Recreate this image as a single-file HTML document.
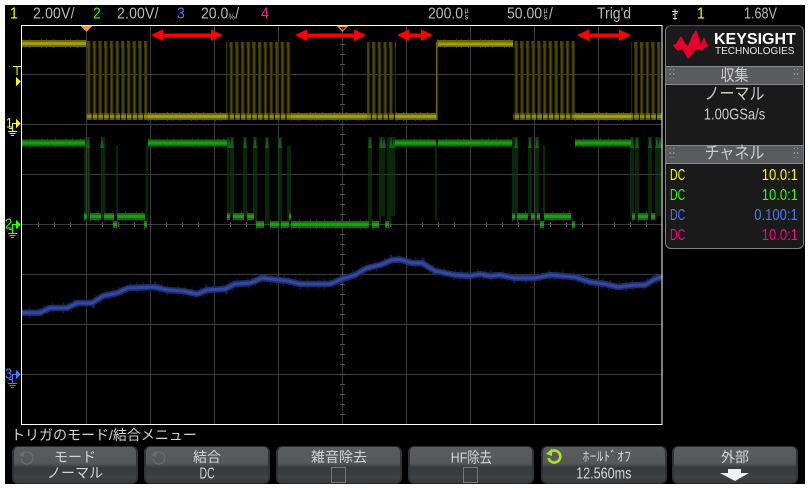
<!DOCTYPE html>
<html><head><meta charset="utf-8"><style>
html,body{margin:0;padding:0;background:#fff}
#s{position:relative;width:810px;height:490px;overflow:hidden;background:#fff}
#b{position:absolute;left:5px;top:5px;width:800px;height:479px;background:#000}
svg{position:absolute;left:0;top:0}
.t{position:absolute;white-space:nowrap;font:14px/16px "Liberation Sans","Noto Sans CJK JP",sans-serif;color:#bdbdbd;transform:scale(1,1.12);transform-origin:left center}
.c{text-align:center;transform-origin:center}
.r{transform-origin:right center}
.u{display:inline-block;font-size:7px;line-height:6px;vertical-align:-1px;width:7px;text-align:center}
.n{display:inline-block;transform:scale(.88,1.12)}
.p{position:absolute;left:665px;top:25px;width:137px;height:222px;background:#1a1a1a;border:1px solid #808080;border-radius:6px;border-top-color:#555}
.h{position:absolute;left:666px;width:137px;height:17px;background:#585c5e;border-top:1px solid #8a8a8a;border-bottom:1px solid #8a8a8a}
.btn{position:absolute;top:446px;width:126px;height:38px;border-radius:6px;box-sizing:border-box;border:1px solid #2a2d2f;border-left:2px solid #2f3335;border-right:2px solid #2f3335;background:linear-gradient(#5a5d5f 0,#55585a 45%,#36393b 58%,#3f4244 85%,#35383a 100%)}
.l{position:absolute;left:0;width:100%;text-align:center;top:2px;font:14px/16px "Liberation Sans","Noto Sans CJK JP",sans-serif;color:#d4d4d4}
.v{top:18px}
.cb{position:absolute;width:13px;height:14px;border:1px solid #777;top:20px}
</style></head><body><div id="s"><div id="b"></div>
<svg width="810" height="490" viewBox="0 0 810 490" shape-rendering="crispEdges">
<defs>
<pattern id="p1" patternUnits="userSpaceOnUse" width="5.7" height="4" x="87" shape-rendering="auto"><rect width="3.6" height="4" fill="#2c2a00"/><rect x="1.1" width="1.4" height="4" fill="#524e00"/></pattern>
<pattern id="p2" patternUnits="userSpaceOnUse" width="5.7" height="4" x="87" shape-rendering="auto"><rect width="4.6" height="4" fill="#5f5b00"/></pattern>
<pattern id="p3" patternUnits="userSpaceOnUse" width="5.7" height="4" x="87" shape-rendering="auto"><rect width="4.6" height="4" fill="#8e890e"/></pattern>
<pattern id="p4" patternUnits="userSpaceOnUse" width="5.7" height="4" x="87" shape-rendering="auto"><rect width="2.6" height="4" fill="#4a4600"/></pattern>
</defs>
<g stroke="#3c3c3c" stroke-width="1" fill="none">
<path d="M22 74.5H662M22 124.5H662M22 174.5H662M22 224.5H662M22 274.5H662M22 324.5H662M22 374.5H662"/>
<path d="M86.5 26V424M150.5 26V424M214.5 26V424M278.5 26V424M342.5 26V424M406.5 26V424M470.5 26V424M534.5 26V424M598.5 26V424"/>
</g>
<path d="M38 224.5H662" stroke="#555" stroke-width="5" stroke-dasharray="1 15" fill="none"/>
<path d="M342.5 34V424" stroke="#555" stroke-width="5" stroke-dasharray="1 9" fill="none"/>
<g>
<g shape-rendering="auto">
<rect x="87" y="41" width="61" height="79" fill="url(#p1)"/><rect x="87" y="41" width="61" height="7" fill="url(#p4)"/><rect x="87" y="113" width="61" height="7" fill="url(#p2)"/><rect x="87" y="115" width="61" height="3" fill="url(#p3)"/>
<rect x="226" y="42" width="65" height="78" fill="url(#p1)"/><rect x="226" y="42" width="65" height="6" fill="url(#p4)"/><rect x="226" y="113" width="65" height="7" fill="url(#p2)"/><rect x="226" y="115" width="65" height="3" fill="url(#p3)"/>
<rect x="367" y="42" width="29" height="78" fill="url(#p1)"/><rect x="367" y="42" width="29" height="6" fill="url(#p4)"/><rect x="367" y="113" width="29" height="7" fill="url(#p2)"/><rect x="367" y="115" width="29" height="3" fill="url(#p3)"/>
<rect x="513" y="41" width="62" height="79" fill="url(#p1)"/><rect x="513" y="41" width="62" height="7" fill="url(#p4)"/><rect x="513" y="113" width="62" height="7" fill="url(#p2)"/><rect x="513" y="115" width="62" height="3" fill="url(#p3)"/>
<rect x="631" y="42" width="31" height="78" fill="url(#p1)"/><rect x="631" y="42" width="31" height="6" fill="url(#p4)"/><rect x="631" y="113" width="31" height="7" fill="url(#p2)"/><rect x="631" y="115" width="31" height="3" fill="url(#p3)"/>
</g>
<path d="M22 43.5H86M437 43.5H513M148 116.5H226M291 116.5H367M396 116.5H437M575 116.5H631" stroke="#3f3c00" stroke-width="9" stroke-dasharray="1 6 1 11 1 4" fill="none"/>
<path d="M22 43.5H86M437 43.5H513M148 116.5H226M291 116.5H367M396 116.5H437M575 116.5H631" stroke="#6a6600" stroke-width="7" fill="none"/>
<path d="M22 43.5H86M438 44H513M148 116.5H226M291 116.5H367M396 116.5H437M575 116.5H631" stroke="#a09b12" stroke-width="3" fill="none"/>
<path d="M436.5 42V120" stroke="#6e6a00" stroke-width="1.5" fill="none"/>
</g>
<g fill="none">
<path shape-rendering="auto" d="M85 137V216M88 137V216M89 137V216M102 137V216M104 137V216M117 146V216M147 145V222M228 137V216M231 137V216M233 137V216M244 137V216M246 137V216M254 137V216M256 137V224M266 137V224M268 137V224M279 137V224M281 137V224M288 146V224M290 146V216M369 137V224M371 137V224M380 137V224M382 137V216M384 137V216M388 137V224M390 137V224M392 137V216M394 137V216M436 143V220M513 137V216M515 137V216M517 137V216M529 137V216M531 137V216M536 137V216M538 137V216M544 146V216M631 137V216M633 137V216M636 137V216M638 137V216M649 137V216M651 137V216M656 137V216M658 137V216M660 137V216" stroke="#0d430d" stroke-width="1.2"/>
<path shape-rendering="auto" fill="#156015" stroke="none" d="M86 148l2-11 2 11zM100 148l2-11 2 11zM227 148l2-11 2 11zM230 148l2-11 2 11zM243 148l2-11 2 11zM253 148l2-11 2 11zM265 148l2-11 2 11zM278 148l2-11 2 11zM368 148l2-11 2 11zM379 148l2-11 2 11zM382 148l2-11 2 11zM389 148l2-11 2 11zM392 148l2-11 2 11zM514 148l2-11 2 11zM528 148l2-11 2 11zM535 148l2-11 2 11zM630 148l2-11 2 11zM635 148l2-11 2 11zM648 148l2-11 2 11zM655 148l2-11 2 11zM658 148l2-11 2 11z"/>
<path d="M22 143H85M148 143H227M395 143H436M438 143H512M575 143H631" stroke="#083a08" stroke-width="10" stroke-dasharray="1 7 1 10 1 5"/>
<path d="M84 216.5H87M90 216.5H101M104 216.5H114M117 216.5H145M227 216.5H230M233 216.5H244M247 216.5H254M289 216.5H291M512 216.5H515M517 216.5H528M531 216.5H535M537 216.5H540M544 216.5H571M632 216.5H635M638 216.5H648M651 216.5H655M113 224.5H117M144 224.5H147M256 224.5H264M270 224.5H279M281 224.5H289M291 224.5H369M372 224.5H379M385 224.5H389M540 224.5H544M572 224.5H575" stroke="#083a08" stroke-width="11" stroke-dasharray="1 7 1 10 1 5"/>
<path d="M22 143H85M148 143H227M395 143H436M438 143H512M575 143H631" stroke="#0f6e0f" stroke-width="7"/>
<path d="M84 216.5H87M90 216.5H101M104 216.5H114M117 216.5H145M227 216.5H230M233 216.5H244M247 216.5H254M289 216.5H291M512 216.5H515M517 216.5H528M531 216.5H535M537 216.5H540M544 216.5H571M632 216.5H635M638 216.5H648M651 216.5H655M113 224.5H117M144 224.5H147M256 224.5H264M270 224.5H279M281 224.5H289M291 224.5H369M372 224.5H379M385 224.5H389M540 224.5H544M572 224.5H575" stroke="#0f6e0f" stroke-width="7"/>
<path d="M22 143H85M148 143H227M395 143H436M438 143H512M575 143H631" stroke="#1f9a12" stroke-width="3"/>
<path d="M84 216.5H87M90 216.5H101M104 216.5H114M117 216.5H145M227 216.5H230M233 216.5H244M247 216.5H254M289 216.5H291M512 216.5H515M517 216.5H528M531 216.5H535M537 216.5H540M544 216.5H571M632 216.5H635M638 216.5H648M651 216.5H655M113 224.5H117M144 224.5H147M256 224.5H264M270 224.5H279M281 224.5H289M291 224.5H369M372 224.5H379M385 224.5H389M540 224.5H544M572 224.5H575" stroke="#1f9a12" stroke-width="3"/>
</g>
<g fill="none" shape-rendering="auto" stroke-linejoin="round">
<path d="M22 312.7L40 312.7L50 308L67 308L77 303L92 303L103 296L117 293L128 288L155 287L167 290L183 291L197 294L207 290L225 289L235 284L250 283L262 278L270 279L288 281L300 284L330 284L342 279L355 275L367 268L380 265L392 260L400 259.5L412 263L422 263L435 271L455 275L470 276L480 274L490 276L500 275L515 278L535 278L550 275L575 277L590 282L605 284L618 287L635 285L645 285L655 279L662 277" stroke="#141d4a" stroke-width="11" stroke-dasharray="1 6 1 10 1 5"/>
<path d="M22 312.7L40 312.7L50 308L67 308L77 303L92 303L103 296L117 293L128 288L155 287L167 290L183 291L197 294L207 290L225 289L235 284L250 283L262 278L270 279L288 281L300 284L330 284L342 279L355 275L367 268L380 265L392 260L400 259.5L412 263L422 263L435 271L455 275L470 276L480 274L490 276L500 275L515 278L535 278L550 275L575 277L590 282L605 284L618 287L635 285L645 285L655 279L662 277" stroke="#1f2d6e" stroke-width="6.5"/>
<path d="M22 312.7L40 312.7L50 308L67 308L77 303L92 303L103 296L117 293L128 288L155 287L167 290L183 291L197 294L207 290L225 289L235 284L250 283L262 278L270 279L288 281L300 284L330 284L342 279L355 275L367 268L380 265L392 260L400 259.5L412 263L422 263L435 271L455 275L470 276L480 274L490 276L500 275L515 278L535 278L550 275L575 277L590 282L605 284L618 287L635 285L645 285L655 279L662 277" stroke="#33499c" stroke-width="3"/>
</g>
<rect x="21.5" y="25.5" width="640.5" height="399" fill="none" stroke="#fff" stroke-width="1"/>
<polygon points="81,26 92,26 86.5,32" fill="#ff9a2e"/>
<polygon points="338,26.5 347,26.5 342.5,31" fill="none" stroke="#ff9a2e" stroke-width="1" shape-rendering="auto"/>
<g fill="#ff0000" shape-rendering="auto">
<polygon points="151,35 163,29.5 163,33.5 211,33.5 211,29.5 223,35 211,41 211,37 163,37 163,41"/>
<polygon points="295,35 307,29.5 307,33.5 354,33.5 354,29.5 366,35 354,41 354,37 307,37 307,41"/>
<polygon points="397,35 409,29.5 409,33.5 421,33.5 421,29.5 433,35 421,41 421,37 409,37 409,41"/>
<polygon points="577,35 589,29.5 589,33.5 619,33.5 619,29.5 631,35 619,41 619,37 589,37 589,41"/>
</g>
<g fill="#ffff00" stroke="none">
<rect x="13" y="66" width="8" height="1"/><rect x="16.5" y="66" width="1" height="9"/>
<polygon points="16,77 21,81.5 16,86"/>
</g>
<g fill="none" stroke="#ffff00" stroke-width="1">
<path d="M9 128.5H12.5V123.5H17M12.5 128.5V131"/><path d="M8 131.5H17M9.5 133.5H15.5M11 135.5H14"/>
<polygon points="16,119 21,123.5 16,128" fill="#ffff00" stroke="none"/></g>
<g fill="none" stroke="#33ff00" stroke-width="1">
<path d="M9 229.5H12.5V224.5H17M12.5 229.5V233"/><path d="M8 233.5H17M9.5 235.5H15.5M11 237.5H14"/>
<polygon points="16,220 21,224.5 16,229" fill="#33ff00" stroke="none"/></g>
<g fill="none" stroke="#4d79ff" stroke-width="1">
<path d="M9 379.5H12.5V374.5H17M12.5 379.5V383"/><path d="M8 383.5H17M9.5 385.5H15.5M11 387.5H14"/>
<polygon points="16,370 21,374.5 16,379" fill="#4d79ff" stroke="none"/></g>
<path d="M672 11.5H678M675 9V20M673 18.5H677M672.5 15L677.5 13" stroke="#ddd" stroke-width="1" fill="none"/>
</svg>
<span class="t" style="left:10px;top:5px;color:#ffff00">1</span>
<span class="t" style="left:33px;top:5px;letter-spacing:.2px">2.00V/</span>
<span class="t" style="left:93px;top:5px;color:#33ff00">2</span>
<span class="t" style="left:117px;top:5px;letter-spacing:.2px">2.00V/</span>
<span class="t" style="left:177px;top:5px;color:#5577ee">3</span>
<span class="t" style="left:201px;top:5px">20.0<span class="u">%</span>/</span>
<span class="t" style="left:261px;top:5px;color:#ff1a80">4</span>
<span class="t" style="left:428px;top:5px">200.0<span class="u">µ<br>s</span></span>
<span class="t" style="left:507px;top:5px">50.00<span class="u">µ<br>s</span>/</span>
<span class="t" style="left:597px;top:5px">Trig'd</span>
<span class="t" style="left:697px;top:5px;color:#ffff00">1</span>
<span class="t" style="left:744px;top:5px;transform:scale(.9,1.12)">1.68V</span>
<span class="t" style="left:6px;top:115px;font-size:12px;color:#ffff00">1</span>
<span class="t" style="left:5px;top:216px;font-size:13px;color:#33ff00">2</span>
<span class="t" style="left:5px;top:366px;font-size:13px;color:#4d79ff">3</span>
<div class="p"></div>
<svg width="810" height="490" viewBox="0 0 810 490" style="pointer-events:none" shape-rendering="auto">
<path d="M673 45L676 44L681 36L685 43L688 46L692 36L696 30L699 38L701 44L704 37L707 44L709 46L705 47L702 51L699 49L696 49L693 53L688 59L685 54L682 48L678 51L675 48Z" fill="#e8002a"/>
</svg>
<span class="t" style="left:714px;top:31px;font:bold 16px/18px 'Liberation Sans',sans-serif;color:#fff;transform:none">KEYSIGHT</span>
<span class="t" style="left:715px;top:46px;font:10px/12px 'Liberation Sans',sans-serif;color:#e8e8e8;transform:none">TECHNOLOGIES</span>
<div class="h" style="top:66px"></div>
<span class="t c" style="left:666px;width:137px;top:67px;font-size:14px;color:#ccc">収集</span>
<span class="t" style="left:669px;top:69px;font-size:9px;line-height:5px;color:#aaa;letter-spacing:1px;transform:none">::<br>::</span>
<span class="t" style="left:793px;top:69px;font-size:9px;line-height:5px;color:#aaa;letter-spacing:1px;transform:none">::<br>::</span>
<span class="t c" style="left:666px;width:137px;top:87px;font-size:15px;color:#ccc">ノーマル</span>
<span class="t c" style="left:666px;width:137px;top:106px;color:#ccc;transform:scale(.93,1.12)">1.00GSa/s</span>
<div class="h" style="top:145px"></div>
<span class="t c" style="left:666px;width:137px;top:146px;font-size:15px;color:#ccc">チャネル</span>
<span class="t" style="left:669px;top:148px;font-size:9px;line-height:5px;color:#aaa;letter-spacing:1px;transform:none">::<br>::</span>
<span class="t" style="left:793px;top:148px;font-size:9px;line-height:5px;color:#aaa;letter-spacing:1px;transform:none">::<br>::</span>
<span class="t" style="left:670px;top:166px;color:#ffff00;transform:scale(.75,1.15)">DC</span><span class="t r" style="right:12px;top:166px;color:#ffff00;transform:scale(.93,1.15)">10.0:1</span>
<span class="t" style="left:670px;top:186px;color:#33ff00;transform:scale(.75,1.15)">DC</span><span class="t r" style="right:12px;top:186px;color:#33ff00;transform:scale(.93,1.15)">10.0:1</span>
<span class="t" style="left:670px;top:206px;color:#4d79ff;transform:scale(.75,1.15)">DC</span><span class="t r" style="right:12px;top:206px;color:#4d79ff;transform:scale(.93,1.15)">0.100:1</span>
<span class="t" style="left:670px;top:226px;color:#ff0080;transform:scale(.75,1.15)">DC</span><span class="t r" style="right:12px;top:226px;color:#ff0080;transform:scale(.93,1.15)">10.0:1</span>
<span class="t" style="left:11px;top:427px;color:#d4d4d4;transform:none">トリガのモード/結合メニュー</span>
<div class="btn" style="left:12px"><div class="l">モード</div><div class="l v">ノーマル</div></div>
<div class="btn" style="left:144px"><div class="l">結合</div><div class="l v"><span class="n" style="transform:scale(.75,1.15)">DC</span></div></div>
<div class="btn" style="left:276px"><div class="l">雑音除去</div><div class="cb" style="left:53px"></div></div>
<div class="btn" style="left:408px"><div class="l"><span class="n" style="transform:scale(.88,1.05)">HF除去</span></div><div class="cb" style="left:53px"></div></div>
<div class="btn" style="left:541px"><div class="l" style="font-size:13px;padding-left:3px;letter-spacing:.5px">ﾎｰﾙﾄﾞｵﾌ</div><div class="l v"><span class="n" style="transform:scale(.9,1.12)">12.560ms</span></div></div>
<div class="btn" style="left:672px"><div class="l">外部</div></div>
<svg width="810" height="490" viewBox="0 0 810 490" shape-rendering="auto" style="pointer-events:none">
<g fill="none" stroke="#6d7072" stroke-width="1"><path d="M23 453.5A6 6 0 1 1 21 459"/><path d="M155 453.5A6 6 0 1 1 153 459"/></g>
<polygon points="19,455 24,451 24,457" fill="#6d7072"/><polygon points="151,455 156,451 156,457" fill="#6d7072"/>
<path d="M551 451.5A6 6 0 1 1 548.5 458" fill="none" stroke="#a6e818" stroke-width="2.6"/>
<polygon points="546,454 552,448.5 552,456" fill="#a6e818"/>
<polygon points="728,469 741,469 741,473 749,473 735,481 720,473 728,473" fill="#f0f0f0"/>
</svg>
</div></body></html>
